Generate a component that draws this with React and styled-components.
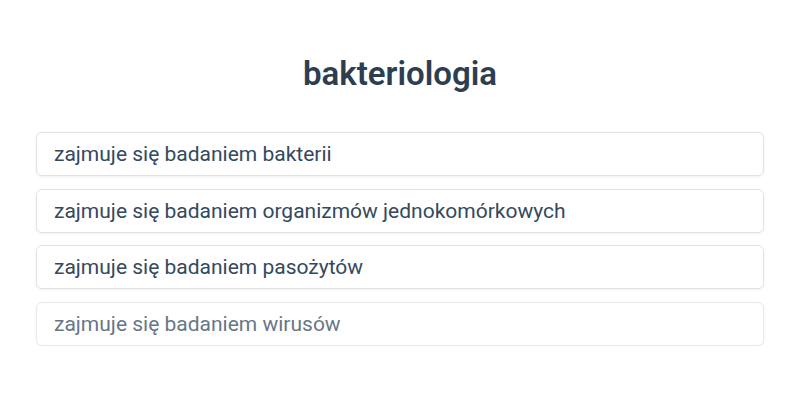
import React from "react";
import styled, { createGlobalStyle } from "styled-components";

const Global = createGlobalStyle`
  html, body { margin: 0; padding: 0; background: #ffffff; }
  body { font-family: Roboto, "Liberation Sans", sans-serif; }
`;

const Page = styled.div`
  padding: 52px 36px 0;
  display: flex;
  flex-direction: column;
  align-items: stretch;
`;

const Title = styled.h1`
  margin: 0 0 36px;
  text-align: center;
  font-size: 33px;
  font-weight: 600;
  line-height: 44px;
  color: #2c3e50;
`;

const List = styled.div`
  display: flex;
  flex-direction: column;
  gap: 12.5px;
`;

const Option = styled.div`
  box-sizing: border-box;
  height: 44px;
  display: flex;
  align-items: center;
  padding: 0 17px;
  border: 1px solid #e2e2e2;
  border-radius: 6px;
  background: #fff;
  box-shadow: 0 1px 3px rgba(0, 0, 0, 0.06);
  font-size: 21px;
  color: #34495e;
  opacity: ${(p) => (p.$faded ? 0.75 : 1)};
`;

const options = [
  "zajmuje się badaniem bakterii",
  "zajmuje się badaniem organizmów jednokomórkowych",
  "zajmuje się badaniem pasożytów",
  "zajmuje się badaniem wirusów",
];

export default function App() {
  return (
    <>
      <Global />
      <Page>
        <Title>bakteriologia</Title>
        <List>
          {options.map((o, i) => (
            <Option key={o} $faded={i === 3}>
              {o}
            </Option>
          ))}
        </List>
      </Page>
    </>
  );
}
